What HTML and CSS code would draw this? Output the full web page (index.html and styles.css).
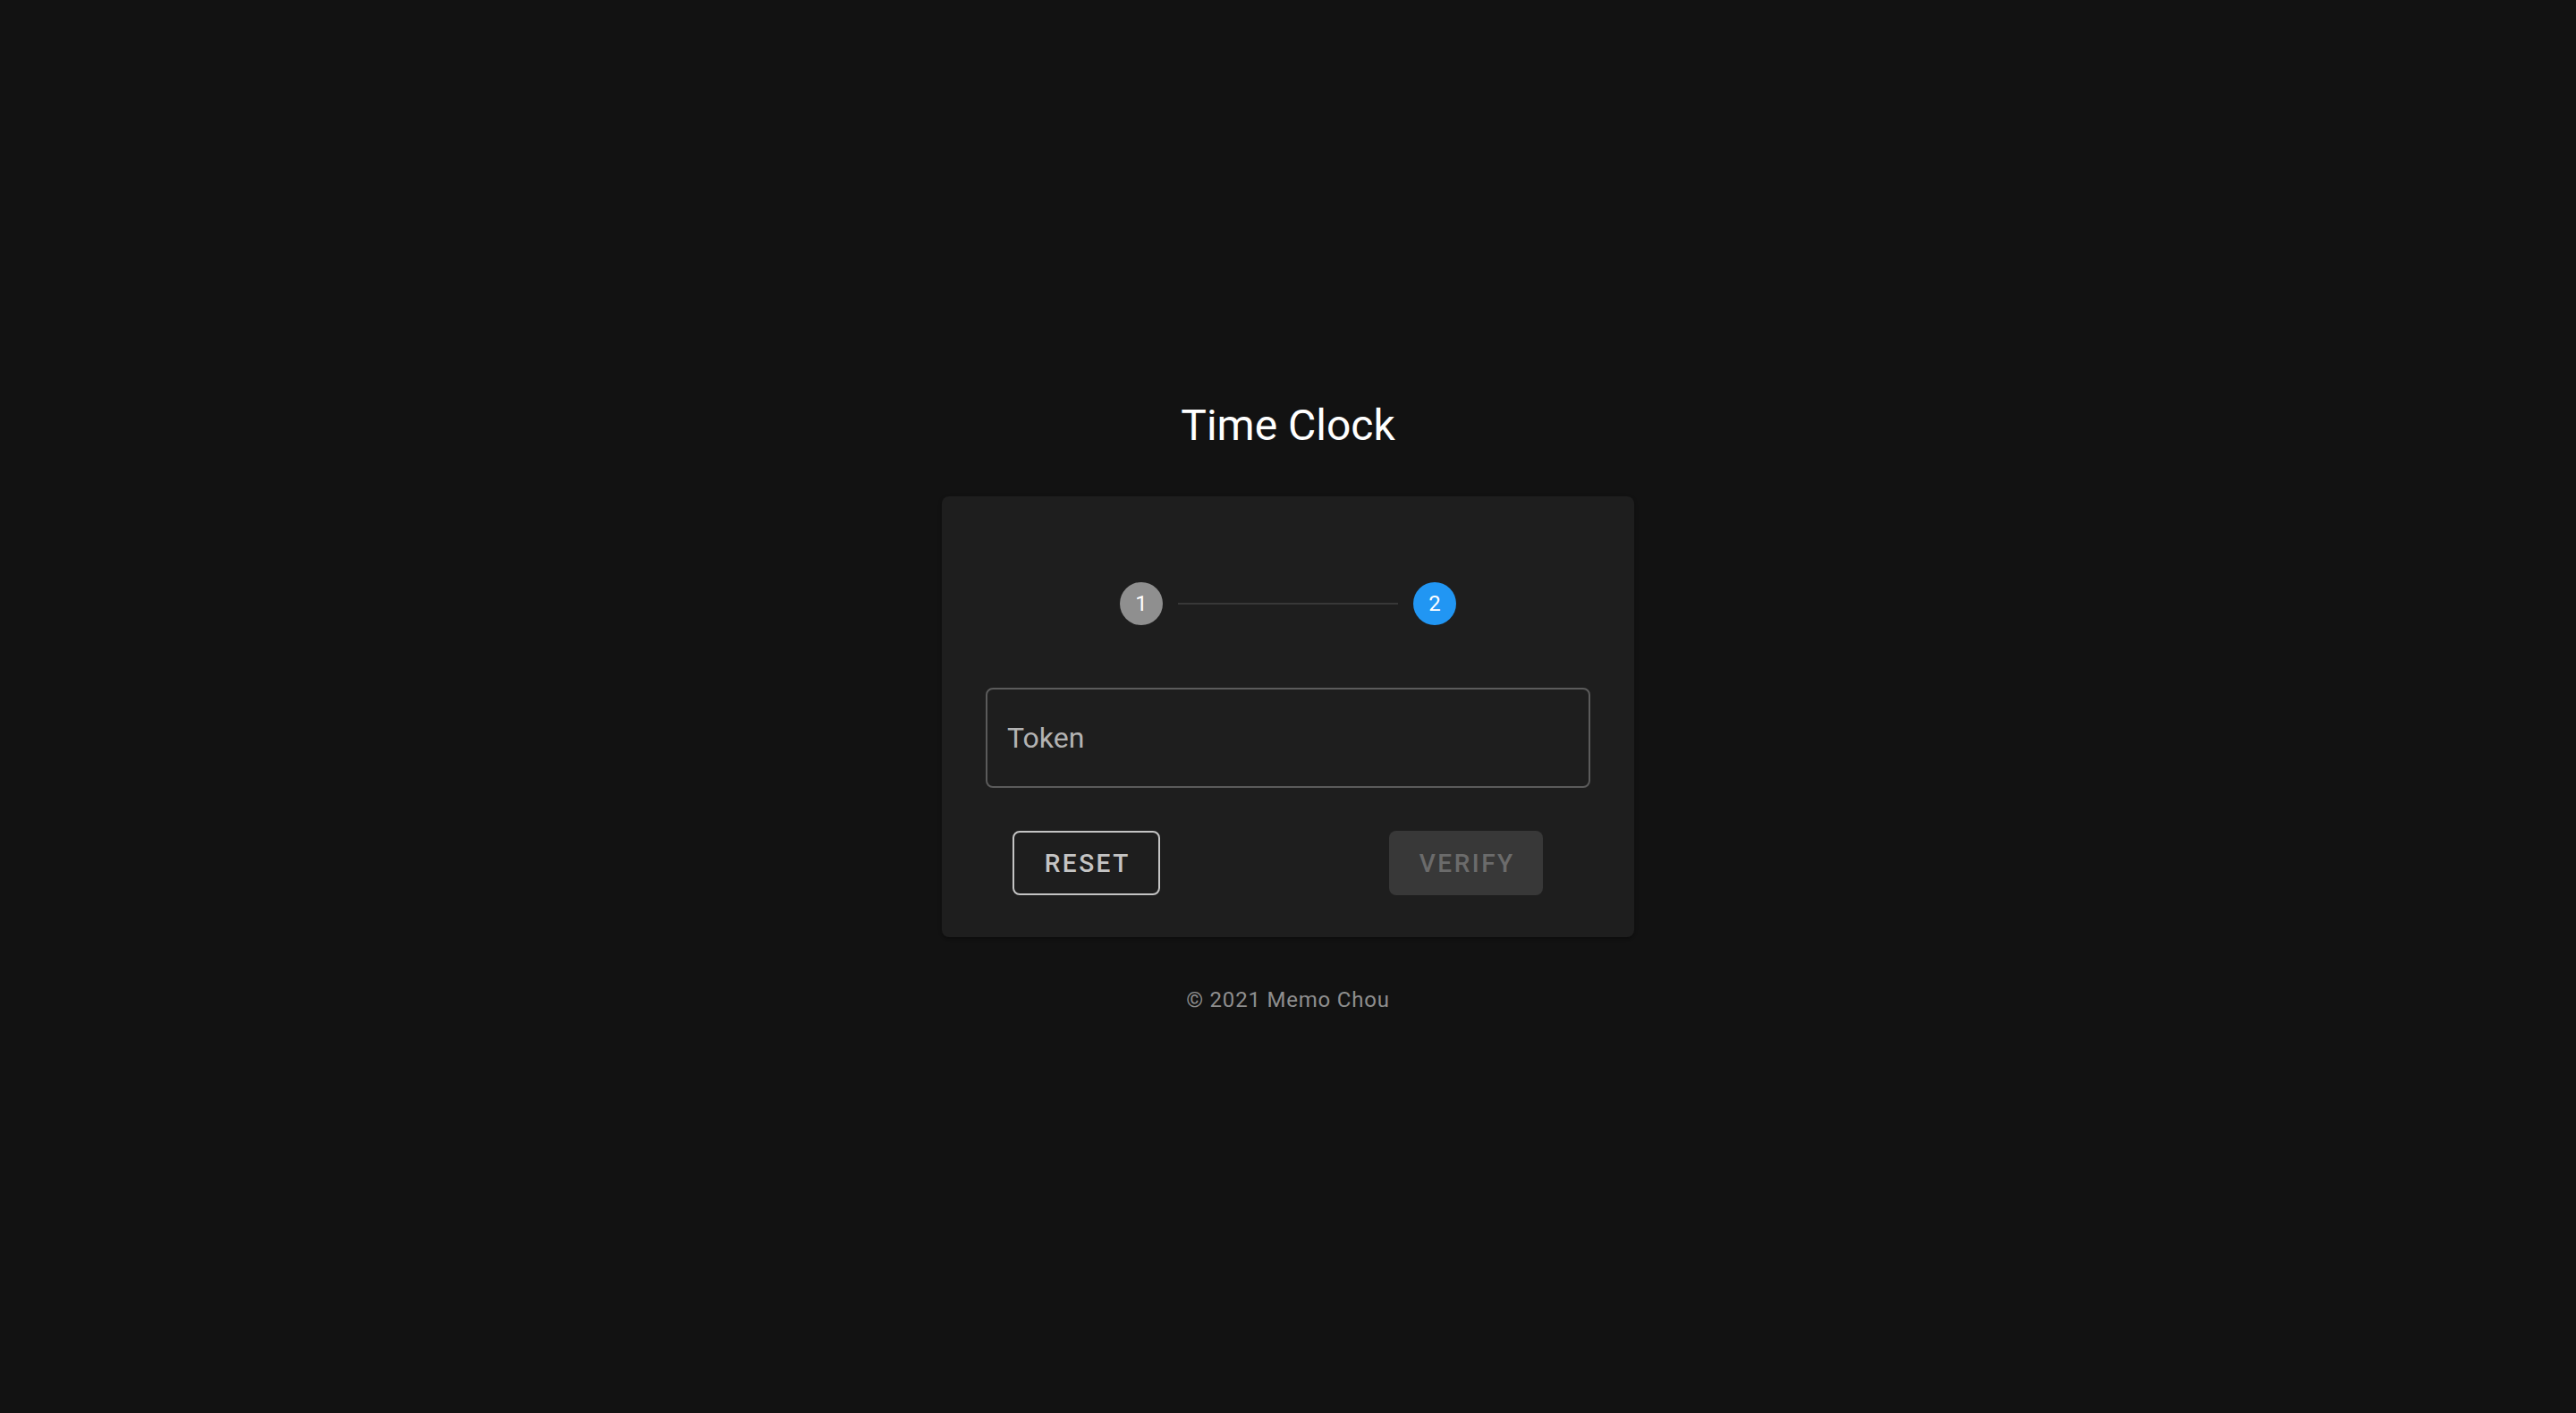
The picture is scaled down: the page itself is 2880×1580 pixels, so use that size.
FILE: index.html
```html
<!DOCTYPE html>
<html lang="en">
<head>
<meta charset="utf-8">
<title>Time Clock</title>
<link rel="stylesheet" href="styles.css">
</head>
<body>
<main class="page">
  <h1 class="title">Time Clock</h1>
  <section class="card">
    <div class="stepper">
      <span class="step step-done">1</span>
      <span class="step-line"></span>
      <span class="step step-active">2</span>
    </div>
    <label class="field">
      <span class="field-label">Token</span>
    </label>
    <div class="actions">
      <button class="btn btn-outlined" type="button">Reset</button>
      <button class="btn btn-disabled" type="button" disabled>Verify</button>
    </div>
  </section>
  <footer class="footer">© 2021 Memo Chou</footer>
</main>
</body>
</html>
```

FILE: styles.css
```css
html, body {
  margin: 0;
  padding: 0;
  background: #121212;
}
body {
  font-family: Roboto, "Noto Sans", "Liberation Sans", sans-serif;
  color: #ffffff;
  min-height: 1580px;
}
.page {
  display: flex;
  flex-direction: column;
  align-items: center;
  padding-top: 444px;
}
.title {
  margin: 0 0 47px;
  font-size: 48px;
  line-height: 64px;
  font-weight: 400;
  letter-spacing: 0;
  color: #ffffff;
}
.card {
  width: 774px;
  box-sizing: border-box;
  padding: 96px 49px 47px;
  background: #1e1e1e;
  border-radius: 8px;
  box-shadow: 0 3px 1px -2px rgba(0,0,0,.2), 0 2px 2px 0 rgba(0,0,0,.14), 0 1px 5px 0 rgba(0,0,0,.12);
  display: flex;
  flex-direction: column;
}
.stepper {
  display: flex;
  align-items: center;
  justify-content: center;
  gap: 17px;
  height: 48px;
}
.step {
  width: 48px;
  height: 48px;
  border-radius: 50%;
  display: flex;
  align-items: center;
  justify-content: center;
  font-size: 24px;
  color: #ffffff;
}
.step-done { background: #8f8f8f; }
.step-active { background: #2196f3; }
.step-line {
  width: 246px;
  height: 2px;
  background: #383838;
}
.field {
  margin-top: 70px;
  height: 112px;
  box-sizing: border-box;
  border: 2px solid #5b5b5b;
  border-radius: 8px;
  display: flex;
  align-items: center;
  padding-left: 22px;
}
.field-label {
  font-size: 32px;
  color: #b3b3b3;
}
.actions {
  margin-top: 48px;
  display: flex;
  justify-content: space-between;
  padding: 0 53px 0 30px;
}
.btn {
  height: 72px;
  box-sizing: border-box;
  border-radius: 8px;
  font-family: Roboto, "Noto Sans", "Liberation Sans", sans-serif;
  font-size: 28px;
  font-weight: 500;
  letter-spacing: 2.5px;
  text-indent: 2.5px;
  text-transform: uppercase;
  display: flex;
  align-items: center;
  justify-content: center;
  padding: 0;
}
.btn-outlined {
  width: 165px;
  background: transparent;
  border: 2px solid #c4c4c4;
  color: #c4c4c4;
}
.btn-disabled {
  width: 172px;
  background: #383838;
  border: none;
  color: #6b6b6b;
}
.footer {
  margin-top: 50px;
  font-size: 24px;
  line-height: 40px;
  letter-spacing: 0.8px;
  color: #8e8e8e;
}
```
